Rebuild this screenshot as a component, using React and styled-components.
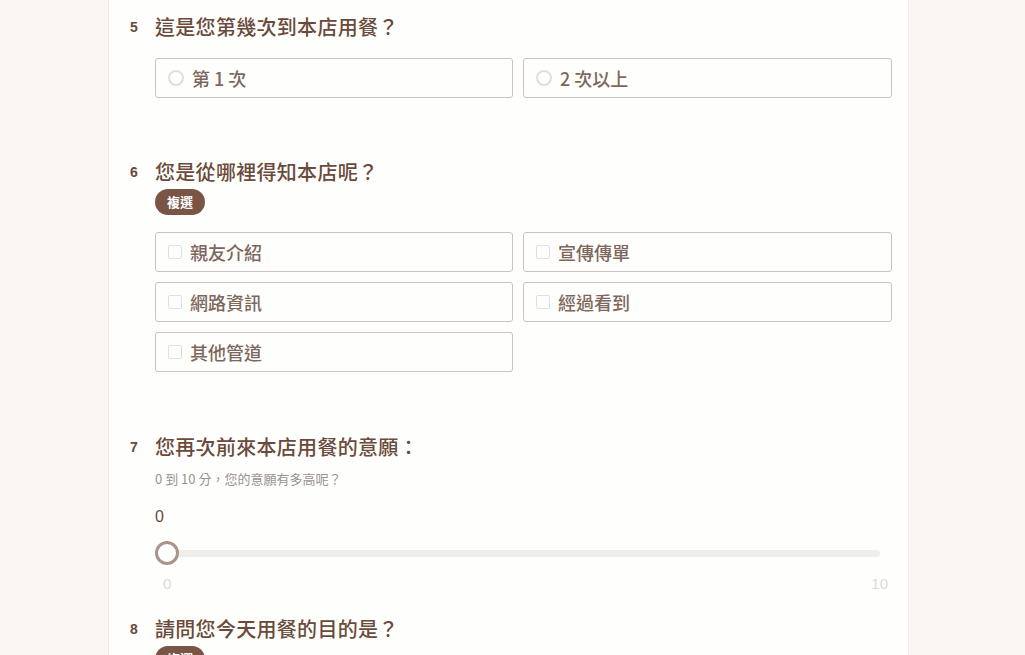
import React, { useState } from "react";
import styled, { createGlobalStyle } from "styled-components";

const GlobalStyle = createGlobalStyle`
  html, body {
    margin: 0;
    padding: 0;
    background: #f9f6f4;
  }
  body {
    font-family: "Noto Sans CJK TC", "Noto Sans", "Liberation Sans", sans-serif;
  }
`;

const QUESTIONS = [
  {
    no: 5,
    title: "這是您第幾次到本店用餐？",
    type: "radio",
    options: ["第 1 次", "2 次以上"],
    gap: 59,
  },
  {
    no: 6,
    title: "您是從哪裡得知本店呢？",
    type: "checkbox",
    multi: true,
    options: ["親友介紹", "宣傳傳單", "網路資訊", "經過看到", "其他管道"],
    gap: 60,
  },
  {
    no: 7,
    title: "您再次前來本店用餐的意願：",
    hint: "0 到 10 分，您的意願有多高呢？",
    type: "slider",
    min: 0,
    max: 10,
    gap: 20,
  },
  {
    no: 8,
    title: "請問您今天用餐的目的是？",
    type: "checkbox",
    multi: true,
    options: [],
    gap: 0,
  },
];

const Page = styled.div`
  width: 1025px;
  height: 655px;
  overflow: hidden;
  display: flex;
  justify-content: flex-start;
`;

const Card = styled.main`
  margin-left: 108px;
  width: 801px;
  box-sizing: border-box;
  background: #fefefd;
  border-left: 1px solid #efebe8;
  border-right: 1px solid #f1eeec;
  padding: 12px 16px 0 20px;
  display: flex;
  flex-direction: column;
`;

const Question = styled.section`
  display: grid;
  grid-template-columns: 26px 1fr;
  margin-bottom: ${(p) => p.$gap}px;
`;

const Number = styled.div`
  padding-left: 1px;
  font-family: "Liberation Sans", Arial, sans-serif;
  font-weight: 700;
  font-size: 14px;
  color: #6a4a3a;
  line-height: 30px;
`;

const Body = styled.div`
  display: flex;
  flex-direction: column;
`;

const Title = styled.h2`
  margin: 0;
  font-size: 20px;
  font-weight: 500;
  line-height: 30px;
  color: #6a4a3a;
  letter-spacing: 0.3px;
`;

const Badge = styled.span`
  align-self: flex-start;
  margin-top: 2px;
  height: 26px;
  padding: 0 12px;
  border-radius: 13px;
  background: #7a5545;
  color: #fff;
  font-size: 13px;
  font-weight: 700;
  line-height: 26px;
`;

const Hint = styled.p`
  margin: 7px 0 0;
  font-size: 13px;
  line-height: 20px;
  color: #9a9390;
`;

const Options = styled.div`
  display: grid;
  grid-template-columns: 358px 369px;
  column-gap: 10px;
  row-gap: 10px;
  margin-top: ${(p) => p.$top}px;
`;

const Option = styled.label`
  height: 40px;
  box-sizing: border-box;
  border: 1px solid #cdc2bd;
  border-radius: 3px;
  background: #fefefd;
  display: flex;
  align-items: center;
  gap: 8px;
  padding-left: 12px;
  font-size: 18px;
  font-weight: 500;
  color: #7d675c;
  cursor: pointer;
`;

const Radio = styled.span`
  width: 16px;
  height: 16px;
  box-sizing: border-box;
  border: 2px solid #e2dedc;
  border-radius: 50%;
  background: ${(p) => (p.$on ? "#7a5545" : "transparent")};
`;

const Check = styled.span`
  width: 14px;
  height: 14px;
  box-sizing: border-box;
  border: 1.5px solid #e2dedc;
  border-radius: 2px;
  background: ${(p) => (p.$on ? "#7a5545" : "transparent")};
`;

const Slider = styled.div`
  display: flex;
  flex-direction: column;
  margin-top: 18px;
`;

const Value = styled.div`
  font-family: "Liberation Sans", Arial, sans-serif;
  font-size: 16px;
  line-height: 20px;
  color: #6a4a3a;
`;

const TrackRow = styled.div`
  position: relative;
  height: 24px;
  margin: 14px 12px 0 0;
  display: flex;
  align-items: center;
`;

const Track = styled.div`
  flex: 1;
  height: 7px;
  margin-left: 12px;
  border-radius: 4px;
  background: #efeeea;
`;

const Thumb = styled.span`
  position: absolute;
  top: 0;
  width: 24px;
  height: 24px;
  box-sizing: border-box;
  border: 3px solid #a8958c;
  border-radius: 50%;
  background: #fff;
`;

const Scale = styled.div`
  display: flex;
  justify-content: space-between;
  padding: 0 4px 0 8px;
  margin-top: 9px;
  font-family: "Liberation Sans", Arial, sans-serif;
  font-size: 15px;
  line-height: 20px;
  color: #dcdad8;
`;

function ChoiceList({ q }) {
  const [picked, setPicked] = useState([]);
  const toggle = (o) => {
    if (q.type === "radio") setPicked([o]);
    else setPicked(picked.includes(o) ? picked.filter((x) => x !== o) : [...picked, o]);
  };
  if (!q.options.length) return null;
  return (
    <Options $top={q.multi ? 17 : 16}>
      {q.options.map((o) => (
        <Option key={o} onClick={() => toggle(o)}>
          {q.type === "radio" ? <Radio $on={picked.includes(o)} /> : <Check $on={picked.includes(o)} />}
          {o}
        </Option>
      ))}
    </Options>
  );
}

function Range({ q }) {
  const [val] = useState(q.min);
  const pct = (val - q.min) / (q.max - q.min);
  return (
    <Slider>
      <Value>{val}</Value>
      <TrackRow>
        <Track />
        <Thumb style={{ left: `calc(${pct * 100}% - ${pct * 24}px)` }} />
      </TrackRow>
      <Scale>
        <span>{q.min}</span>
        <span>{q.max}</span>
      </Scale>
    </Slider>
  );
}

export default function App() {
  return (
    <>
      <GlobalStyle />
      <Page>
        <Card>
          {QUESTIONS.map((q) => (
            <Question key={q.no} $gap={q.gap}>
              <Number>{q.no}</Number>
              <Body>
                <Title>{q.title}</Title>
                {q.multi && <Badge>複選</Badge>}
                {q.hint && <Hint>{q.hint}</Hint>}
                {q.type === "slider" ? <Range q={q} /> : <ChoiceList q={q} />}
              </Body>
            </Question>
          ))}
        </Card>
      </Page>
    </>
  );
}
